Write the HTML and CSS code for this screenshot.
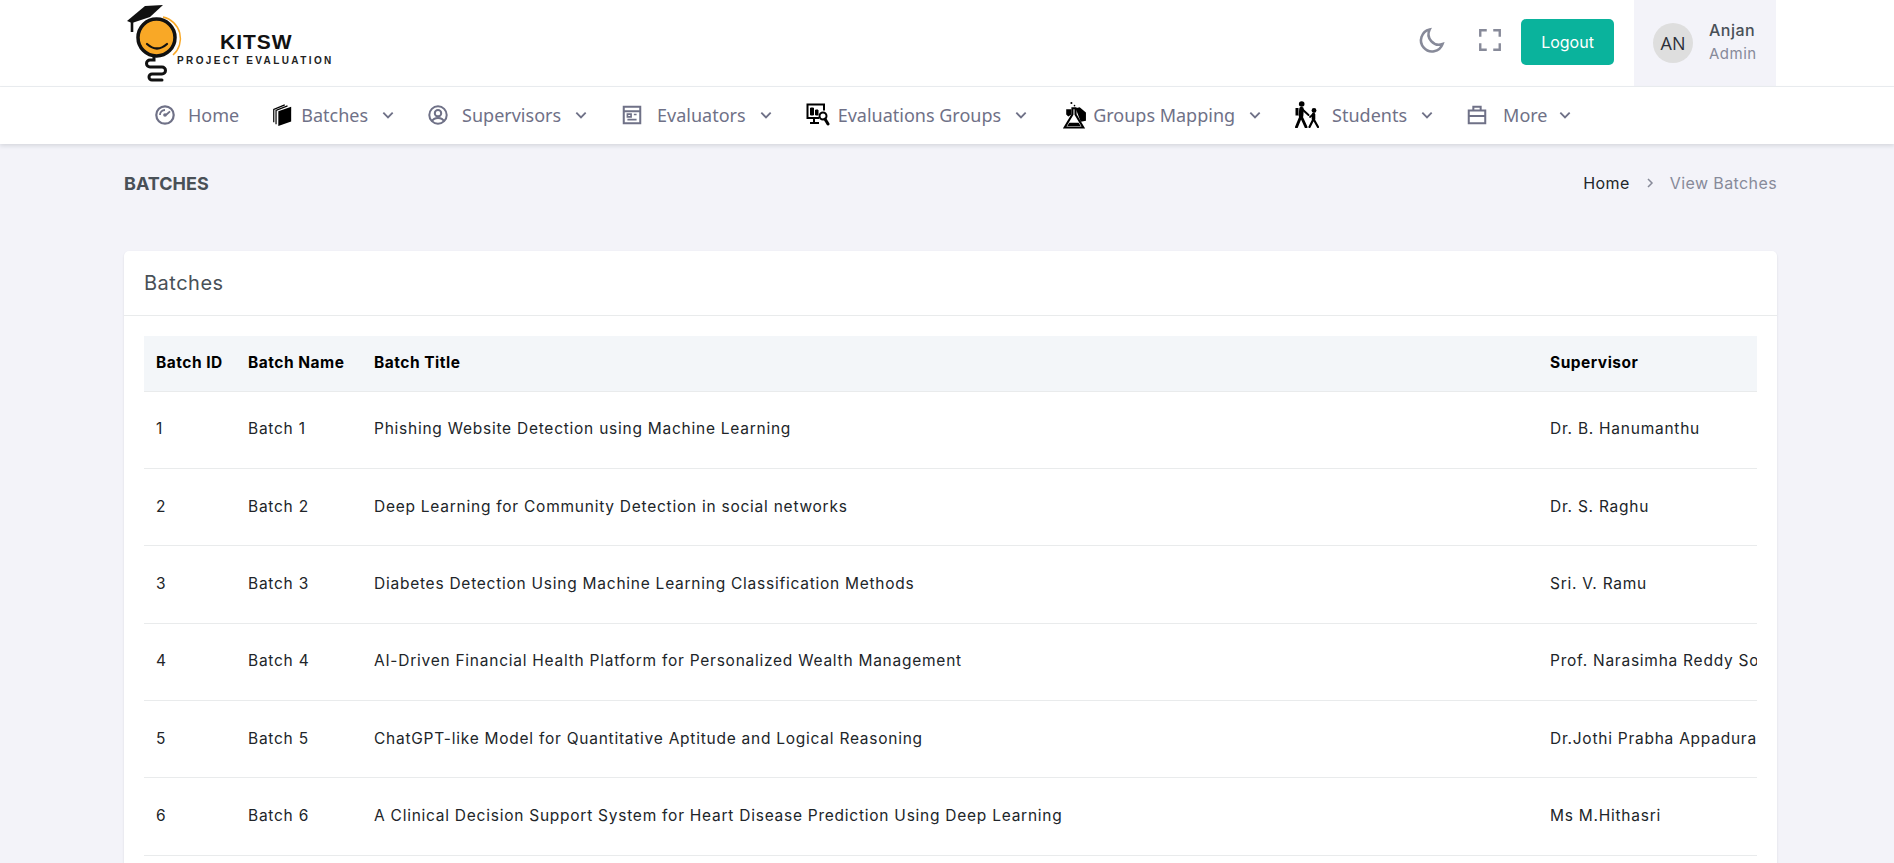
FILE: index.html
```html
<!DOCTYPE html>
<html lang="en">
<head>
    <meta charset="UTF-8">
    <meta name="viewport" content="width=device-width, initial-scale=1.0">
    <title>KITSW Project Evaluation</title>
    <link rel="stylesheet" href="styles.css">
</head>
<body>
    <header class="topbar">
        <div class="brand">
            <svg class="brand-logo" viewBox="0 0 56 82" width="56" height="82">
                <path d="M36 14A22 22 0 0 1 46 52" fill="none" stroke="#f9a826" stroke-width="1.5"/>
                <circle cx="29.500" cy="34.500" r="18.500" fill="#f9a826" stroke="#111" stroke-width="3.500"/>
                <path d="M20 41q10 9 20 0" fill="none" stroke="#111" stroke-width="2.200" stroke-linecap="round"/>
                <path d="M0 18L18 3 36 2 23 14 5 20z" fill="#111"/>
                <path d="M5 19v10" stroke="#111" stroke-width="2.600"/>
                <path d="M27 54v3h-4a3.500 3.500 0 0 0 0 7h12a3.500 3.500 0 0 1 0 7h-10a3 3 0 0 0 0 6h10" fill="none" stroke="#111" stroke-width="3" stroke-linecap="round"/>
            </svg>
            <div class="brand-text">
                <div class="brand-name">KITSW</div>
                <div class="brand-sub">PROJECT EVALUATION</div>
            </div>
        </div>
        <div class="topbar-right">
            <button class="icon-btn">
                <svg viewBox="0 0 24 24" width="28" height="28" fill="none" stroke="#878a99" stroke-width="2.200"><path d="M10 3a9.500 9.500 0 1 0 11 12.500A9 9 0 0 1 10 3z"/></svg>
            </button>
            <button class="icon-btn">
                <svg viewBox="0 0 24 24" width="26" height="26" fill="none" stroke="#878a99" stroke-width="2.200"><path d="M3 9V3h6M15 3h6v6M21 15v6h-6M9 21H3v-6"/></svg>
            </button>
            <button class="logout-btn">Logout</button>
            <div class="profile">
                <div class="avatar">AN</div>
                <div class="profile-text">
                    <div class="profile-name">Anjan</div>
                    <div class="profile-role">Admin</div>
                </div>
            </div>
        </div>
    </header>

    <nav class="navbar">
        <a class="nav-item nav-home">
            <svg class="nav-icon" viewBox="0 0 24 24" fill="none" stroke="#6f7187" stroke-width="2.400"><circle cx="12" cy="12" r="9.500"/><path d="M12 6.500A5.500 5.500 0 0 0 6.500 12M17.500 8L13 12" stroke-width="2"/><circle cx="12" cy="12" r="2" fill="#6f7187" stroke="none"/></svg>
            <span>Home</span>
        </a>
        <a class="nav-item nav-batches">
            <svg class="nav-icon" viewBox="0 0 24 24"><path d="M8 8l14-5v16L8 24z" fill="#000"/><path d="M5.500 22V7L18 2M3 20V6L15 1" fill="none" stroke="#000" stroke-width="1.300"/></svg>
            <span>Batches</span>
            <svg class="chevron" viewBox="0 0 12 12"><path d="M2 4l4 4 4-4"/></svg>
        </a>
        <a class="nav-item nav-supervisors">
            <svg class="nav-icon" viewBox="0 0 24 24" fill="none" stroke="#6f7187" stroke-width="2.200"><circle cx="12" cy="12" r="9.500"/><circle cx="12" cy="10" r="3.500"/><path d="M5.500 19c2-5 11-5 13 0"/></svg>
            <span>Supervisors</span>
            <svg class="chevron" viewBox="0 0 12 12"><path d="M2 4l4 4 4-4"/></svg>
        </a>
        <a class="nav-item nav-evaluators">
            <svg class="nav-icon" viewBox="0 0 24 24" fill="none" stroke="#6f7187" stroke-width="2.200"><path d="M3 3h18v18H3zM3 8h18"/><path d="M7 11h4v3H7zM14 11.500h3M7 17h10" stroke-width="1.800"/></svg>
            <span>Evaluators</span>
            <svg class="chevron" viewBox="0 0 12 12"><path d="M2 4l4 4 4-4"/></svg>
        </a>
        <a class="nav-item nav-groups">
            <svg class="nav-icon" viewBox="0 0 24 24" fill="none" stroke="#000" stroke-width="2"><path d="M13 15H1.500V1.500H18v6M8 15v4M4 20h9"/><path d="M4.500 5h3v7h-3zM9.500 7H12v5H9.500z" fill="#000" stroke-width="1"/><circle cx="17" cy="13" r="3.500"/><path d="M19 16l3 5" stroke-width="3" stroke-linecap="round"/></svg>
            <span>Evaluations Groups</span>
            <svg class="chevron" viewBox="0 0 12 12"><path d="M2 4l4 4 4-4"/></svg>
        </a>
        <a class="nav-item nav-mapping">
            <svg class="nav-icon" viewBox="0 0 22 27"><path d="M12 7l4-1 6 5v8l-5 1z" fill="#000"/><path d="M3 8h5v5l-3 2-2-2z" fill="#000"/><circle cx="8" cy="2" r="1"/><circle cx="11" cy="4.500" r=".8"/><path d="M9 7v6L1.500 25.500h18L12 13V7z" fill="#fff" stroke="#000" stroke-width="2"/><path d="M6 21h9l2 3H4z" fill="#000"/></svg>
            <span>Groups Mapping</span>
            <svg class="chevron" viewBox="0 0 12 12"><path d="M2 4l4 4 4-4"/></svg>
        </a>
        <a class="nav-item nav-students">
            <svg class="nav-icon" viewBox="0 0 24 27" fill="none" stroke="#000" stroke-linecap="round"><circle cx="6.700" cy="3" r="2.800" fill="#000" stroke="none"/><path d="M6.500 8L6 15" stroke-width="4.600"/><path d="M6 15L1.500 26M6 15l5 11" stroke-width="2.900"/><path d="M7 8l6.500 6" stroke-width="2"/><path d="M.5 7h3v7.500h-3z" fill="#000" stroke="none"/><circle cx="19" cy="9.500" r="2.400" fill="#000" stroke="none"/><path d="M18.500 13.500v4.500" stroke-width="3.600"/><path d="M18.500 18l-4 8M18.500 18l4.500 8" stroke-width="2.200"/><path d="M18 13.500l-3 2.500" stroke-width="1.800"/></svg>
            <span>Students</span>
            <svg class="chevron" viewBox="0 0 12 12"><path d="M2 4l4 4 4-4"/></svg>
        </a>
        <a class="nav-item nav-more">
            <svg class="nav-icon" viewBox="0 0 24 24" fill="none" stroke="#6f7187" stroke-width="2.200"><path d="M3 7h18v14H3zM8 7V3h8v4M3 13h18"/></svg>
            <span>More</span>
            <svg class="chevron" viewBox="0 0 12 12"><path d="M2 4l4 4 4-4"/></svg>
        </a>
    </nav>

    <main class="page">
        <div class="page-title">
            <h4>BATCHES</h4>
            <div class="breadcrumb">
                <span class="crumb-home">Home</span>
                <svg class="crumb-sep" viewBox="0 0 12 12"><path d="M4 2l4 4-4 4"/></svg>
                <span class="crumb-current">View Batches</span>
            </div>
        </div>

        <section class="card">
            <div class="card-header">Batches</div>
            <div class="card-body">
                <div class="table-wrap">
                    <table class="batch-table">
                        <thead>
                            <tr>
                                <th class="col-id">Batch ID</th>
                                <th class="col-name">Batch Name</th>
                                <th class="col-title">Batch Title</th>
                                <th class="col-sup">Supervisor</th>
                            </tr>
                        </thead>
                        <tbody>
                            <tr><td>1</td><td>Batch 1</td><td>Phishing Website Detection using Machine Learning</td><td>Dr. B. Hanumanthu</td></tr>
                            <tr><td>2</td><td>Batch 2</td><td>Deep Learning for Community Detection in social networks</td><td>Dr. S. Raghu</td></tr>
                            <tr><td>3</td><td>Batch 3</td><td>Diabetes Detection Using Machine Learning Classification Methods</td><td>Sri. V. Ramu</td></tr>
                            <tr><td>4</td><td>Batch 4</td><td>AI-Driven Financial Health Platform for Personalized Wealth Management</td><td>Prof. Narasimha Reddy Soma</td></tr>
                            <tr><td>5</td><td>Batch 5</td><td>ChatGPT-like Model for Quantitative Aptitude and Logical Reasoning</td><td>Dr.Jothi Prabha Appadurai</td></tr>
                            <tr><td>6</td><td>Batch 6</td><td>A Clinical Decision Support System for Heart Disease Prediction Using Deep Learning</td><td>Ms M.Hithasri</td></tr>
                        </tbody>
                    </table>
                </div>
            </div>
        </section>
    </main>
</body>
</html>
```

FILE: styles.css
```css
* {
    box-sizing: border-box;
}

body {
    margin: 0;
    height: 863px;
    overflow: hidden;
    background-color: #f3f3f9;
    font-family: Inter, "Liberation Sans", sans-serif;
    color: #212529;
}

/* 상단 바 */
.topbar {
    display: flex;
    justify-content: space-between;
    height: 87px;
    padding: 0 118px 0 127px;
    background-color: #fff;
    border-bottom: 1px solid #eceef1;
}

.brand {
    display: flex;
    align-items: flex-start;
}

.brand-logo {
    margin-top: 3px;
}

.brand-text {
    margin: 30px 0 0 -6px;
}

.brand-name {
    margin-left: 43px;
    font-family: "Liberation Sans", sans-serif;
    font-size: 21px;
    line-height: 24px;
    font-weight: 700;
    letter-spacing: 1px;
    color: #111;
}

.brand-sub {
    margin-top: 1px;
    font-family: "Liberation Sans", sans-serif;
    font-size: 10px;
    line-height: 12px;
    font-weight: 700;
    letter-spacing: 2.4px;
    color: #222;
}

.topbar-right {
    display: flex;
    align-items: flex-start;
}

.icon-btn {
    display: flex;
    align-items: center;
    justify-content: center;
    width: 58px;
    height: 40px;
    margin-top: 20px;
    padding: 0;
    border: none;
    background: none;
}

.logout-btn {
    width: 93px;
    height: 46px;
    margin: 19px 20px 0 2px;
    padding-bottom: 2px;
    border: none;
    border-radius: 5px;
    background-color: #0ab39c;
    color: #fff;
    font-family: Inter, sans-serif;
    font-size: 16px;
}

.profile {
    display: flex;
    align-items: center;
    width: 142px;
    height: 86px;
    padding-left: 19px;
    background-color: #f3f3f9;
}

.avatar {
    display: flex;
    align-items: center;
    justify-content: center;
    width: 40px;
    height: 40px;
    border-radius: 50%;
    background-color: #dedede;
    font-family: "Open Sans", sans-serif;
    font-size: 18px;
    color: #2b2f38;
}

.profile-text {
    margin: -2px 0 0 16px;
    letter-spacing: 0.5px;
}

.profile-name {
    font-size: 16px;
    line-height: 24px;
    font-weight: 500;
    color: #495057;
}

.profile-role {
    font-size: 15px;
    line-height: 24px;
    color: #878a99;
}

/* 메뉴 */
.navbar {
    position: relative;
    display: flex;
    align-items: center;
    height: 57px;
    padding: 0 0 2px 154px;
    background-color: #fff;
    box-shadow: 0 2px 4px rgba(56, 65, 74, 0.15);
}

.nav-item {
    display: flex;
    align-items: center;
    margin-right: 33px;
    font-family: "Noto Sans", sans-serif;
    font-size: 18px;
    color: #6f7187;
}

.nav-icon {
    flex: none;
    width: 22px;
    height: 22px;
    margin-right: 13px;
}

.chevron {
    flex: none;
    width: 14px;
    height: 14px;
    margin-left: 13px;
    fill: none;
    stroke: #6f7187;
    stroke-width: 1.6;
}

.nav-home {
    margin-right: 32px;
}

.nav-home .nav-icon {
    margin-right: 12px;
}

.nav-batches {
    margin-right: 32px;
}

.nav-batches .nav-icon {
    margin-right: 8px;
}

.nav-evaluators .nav-icon {
    margin-right: 14px;
}

.nav-groups {
    margin-right: 35px;
}

.nav-groups .nav-icon {
    width: 24px;
    height: 24px;
    margin-right: 8px;
}

.nav-mapping .nav-icon {
    width: 23px;
    height: 28px;
    margin-right: 7px;
}

.nav-students {
    margin-right: 32px;
}

.nav-students .nav-icon {
    width: 24px;
    height: 27px;
    margin-right: 13px;
}

.nav-more .nav-icon {
    margin-right: 15px;
}

.nav-more .chevron {
    margin-left: 10px;
}

/* 본문 */
.page {
    padding: 0 117px 0 124px;
}

.page-title {
    display: flex;
    align-items: center;
    justify-content: space-between;
    height: 78px;
    margin-bottom: 29px;
}

.page-title h4 {
    margin: 0;
    font-size: 18px;
    font-weight: 700;
    color: #495057;
}

.breadcrumb {
    display: flex;
    align-items: center;
    font-size: 16px;
    letter-spacing: 0.4px;
}

.crumb-home {
    color: #212529;
}

.crumb-sep {
    width: 12px;
    height: 12px;
    margin: 0 14px;
    fill: none;
    stroke: #878a99;
    stroke-width: 1.5;
}

.crumb-current {
    color: #878a99;
}

.card {
    background-color: #fff;
    border-radius: 5px;
    box-shadow: 0 1px 2px rgba(56, 65, 74, 0.15);
}

.card-header {
    height: 65px;
    padding: 0 20px;
    border-bottom: 1px solid #e9ebec;
    font-size: 20px;
    letter-spacing: 0.5px;
    line-height: 64px;
    color: #495057;
}

.card-body {
    padding: 20px 20px 60px;
}

.table-wrap {
    overflow: hidden;
}

.batch-table {
    width: 1900px;
    border-collapse: collapse;
    table-layout: fixed;
    font-size: 15.5px;
    letter-spacing: 0.75px;
}

.batch-table th {
    height: 55px;
    padding: 0 12px 2px;
    background-color: #f3f6f9;
    border-bottom: 1px solid #e9ebec;
    text-align: left;
    font-weight: 700;
    letter-spacing: 0.5px;
    color: #000;
}

.batch-table td {
    height: 77.4px;
    padding: 0 12px 2px;
    border-bottom: 1px solid #e9ebec;
    white-space: nowrap;
    color: #212529;
}

.col-id {
    width: 92px;
}

.col-name {
    width: 126px;
}

.col-title {
    width: 1176px;
}
```
